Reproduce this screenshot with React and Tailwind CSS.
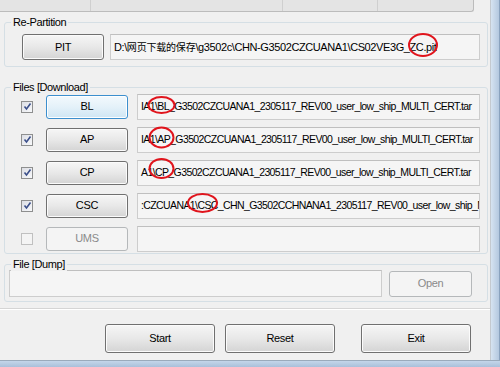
import React from "react";

const FONT = { fontFamily: '"Liberation Sans", "Noto Sans CJK SC", Arial, sans-serif' };

// file rows in the Files [Download] box
const rows = [
  { name: "BL", text: "IA1\\BL_G3502CZCUANA1_2305117_REV00_user_low_ship_MULTI_CERT.tar", checked: true, focus: true },
  { name: "AP", text: "IA1\\AP_G3502CZCUANA1_2305117_REV00_user_low_ship_MULTI_CERT.tar", checked: true },
  { name: "CP", text: "A1\\CP_G3502CZCUANA1_2305117_REV00_user_low_ship_MULTI_CERT.tar", checked: true },
  { name: "CSC", text: ":CZCUANA1\\CSC_CHN_G3502CCHNANA1_2305117_REV00_user_low_ship_M", checked: true },
  { name: "UMS", text: "", checked: false, disabled: true },
];

function WinButton({ children, className = "", focus, disabled }) {
  let look =
    "border-[#707070] bg-gradient-to-b from-[#f6f6f6] via-[#e8e8e8] to-[#d4d4d4] text-black shadow-[inset_0_0_0_1px_#fbfbfb]";
  if (focus)
    look =
      "border-[#3c8fce] bg-gradient-to-b from-[#f3f9fd] via-[#e4f1f9] to-[#cfe6f4] text-black shadow-[inset_0_0_0_1px_#fdfeff]";
  if (disabled) look = "border-[#b5b8ba] bg-[#f4f4f4] text-[#8a8a8a]";
  return (
    <div
      className={`flex items-center justify-center border rounded-[3px] text-[11px] tracking-[-0.3px] ${look} ${className}`}
    >
      {children}
    </div>
  );
}

function Field({ children, className = "" }) {
  return (
    <div
      className={`flex items-center overflow-hidden whitespace-nowrap border border-[#cdcdcd] border-t-[#bfbfbf] bg-[#f5f5f5] pl-[3px] text-black ${className}`}
    >
      {children}
    </div>
  );
}

function CheckBox({ checked, disabled }) {
  return (
    <div
      className={`w-[12px] h-[12px] border flex items-center justify-center ${
        disabled
          ? "border-[#c0c0c0] bg-[#f4f4f4]"
          : "border-[#8e8f8f] bg-gradient-to-br from-[#dcdee4] to-[#f8f9fb]"
      }`}
    >
      {checked && (
        <svg width="9" height="9" viewBox="0 0 9 9">
          <path d="M1.5 4.5 L3.5 7 L7.5 1.5" fill="none" stroke="#3b4f8a" strokeWidth="1.6" />
        </svg>
      )}
    </div>
  );
}

function Group({ label, className = "", children }) {
  return (
    <div className={`relative ml-[4px] w-[484px] border border-[#d5dfe5] rounded-[3px] ${className}`}>
      <span className="absolute -top-[7px] left-[6px] bg-[#f0f0f0] px-[2px] text-[11px] leading-[13px] tracking-[-0.4px] text-black">
        {label}
      </span>
      {children}
    </div>
  );
}

export default function App() {
  return (
    <div className="relative w-[500px] h-[367px] bg-[#f0f0f0] flex flex-col overflow-hidden" style={FONT}>
      <div className="flex flex-1">
        <div className="w-[491px] flex flex-col border-r border-[#c4c9cf]">
          {/* bottom edge of the port table above */}
          <div className="flex h-[12px] w-[474px] bg-[#e4e4e4] border-b border-r border-[#bcbcbc] rounded-br-[3px]">
            <div className="w-[91px] border-r border-[#cfcfcf]" />
            <div className="w-[192px] border-r border-[#cfcfcf]" />
            <div className="w-[95px] border-r border-[#cfcfcf]" />
            <div className="flex-1" />
          </div>

          <Group label="Re-Partition" className="mt-[10px] h-[45px]">
            <div className="flex items-center pl-[17px] pt-[11px] gap-[6px]">
              <WinButton className="w-[82px] h-[26px]">PIT</WinButton>
              <Field className="w-[370px] h-[26px] text-[11px] tracking-[-0.4px]">
                D:\<span className="text-[10px] tracking-[-0.2px]">网页下载的保存</span>\g3502c\CHN-G3502CZCUANA1\CS02VE3G_ZC.pit
              </Field>
            </div>
          </Group>

          <Group label="Files [Download]" className="mt-[20px] h-[167px]">
            <div className="flex flex-col gap-[8px] pt-[6px]">
              {rows.map((r) => (
                <div key={r.name} className="flex items-center h-[25px] pl-[16px]">
                  <CheckBox checked={r.checked} disabled={r.disabled} />
                  <WinButton
                    className="ml-[13px] w-[82px] h-[24px]"
                    focus={r.focus}
                    disabled={r.disabled}
                  >
                    {r.name}
                  </WinButton>
                  <Field className="ml-[9px] w-[343px] h-[26px] text-[10.5px] tracking-[-0.6px]">
                    {r.text}
                  </Field>
                </div>
              ))}
            </div>
          </Group>

          <Group label="File [Dump]" className="mt-[10px] h-[38px]">
            <div className="flex items-center pl-[4px] pt-[5px]">
              <Field className="w-[373px] h-[27px]" />
              <WinButton className="ml-[7px] w-[83px] h-[26px]" disabled>
                Open
              </WinButton>
            </div>
          </Group>

          <div className="mt-[6px] h-px bg-[#d5d5d5] border-b border-white box-content" />

          <div className="flex justify-end pr-[19px] mt-[14px]">
            <WinButton className="w-[110px] h-[29px]">Start</WinButton>
            <WinButton className="ml-[10px] w-[110px] h-[29px]">Reset</WinButton>
            <WinButton className="ml-[26px] w-[110px] h-[29px]">Exit</WinButton>
          </div>
        </div>
        <div className="w-[9px] bg-gradient-to-r from-[#d6e3f1] to-[#b4c8df] border-r border-[#8aa2be]" />
      </div>
      <div className="h-[7px] bg-gradient-to-b from-[#c4d6ea] to-[#a9c0da] border-t border-[#9aaabb]" />

      {/* red annotation circles */}
      <svg className="absolute left-0 top-0 pointer-events-none" width="500" height="367">
        <g fill="none" stroke="#e0141c" strokeWidth="2">
          <ellipse cx="423" cy="45" rx="14" ry="11" />
          <ellipse cx="161.5" cy="105" rx="13" ry="8" />
          <ellipse cx="161.5" cy="137.5" rx="12" ry="10" />
          <ellipse cx="161.5" cy="168.5" rx="12" ry="9.5" />
          <ellipse cx="202.5" cy="203" rx="14.5" ry="9" />
        </g>
      </svg>
    </div>
  );
}
